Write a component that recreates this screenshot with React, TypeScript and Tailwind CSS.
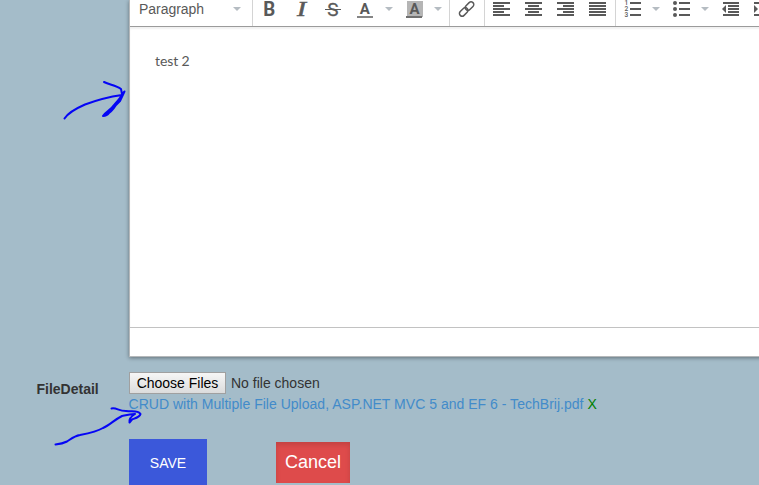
import type { ReactNode } from "react";

const INK = "#595959";

function Icon({ children, className = "w-8" }: { children: ReactNode; className?: string }) {
  return (
    <button type="button" className={`h-[26px] shrink-0 ${className}`}>
      <svg width="32" height="26" viewBox="0 0 32 26" className="block overflow-visible" fill={INK}>
        {children}
      </svg>
    </button>
  );
}

function Caret({ className = "w-4" }: { className?: string }) {
  return (
    <span className={`flex h-[26px] shrink-0 justify-center pt-[7px] ${className}`}>
      <svg width="8" height="4" viewBox="0 0 8 4" fill="#b5bcc2">
        <path d="M0 0h8L4 4z" />
      </svg>
    </span>
  );
}

function Lines({ rows }: { rows: [number, number][] }) {
  return (
    <>
      {rows.map(([x, w], i) => (
        <rect key={i} x={x} y={2 + i * 3} width={w} height="2" />
      ))}
    </>
  );
}

const group = "flex h-[26px] shrink-0 border-r border-[#d4d4d4]";

function Toolbar() {
  return (
    <div className="flex h-[27px] overflow-hidden border-b border-[#9b9b9b] bg-white">
      <div className={`${group} w-[123px] justify-between pl-[9px]`}>
        <span className="-mt-[1px] text-[14px] leading-5 tracking-[-0.03px] text-[#595959]">Paragraph</span>
        <Caret className="w-[31px]" />
      </div>
      <div className={`${group} w-[197px]`}>
        <Icon>
          <text x="10.2" y="16" fontSize="19.5" fontWeight="700" fontFamily="Roboto" textLength="12" lengthAdjust="spacingAndGlyphs">B</text>
        </Icon>
        <Icon>
          <text x="12" y="16" fontSize="21" fontStyle="italic" fontFamily="Liberation Serif" stroke={INK} strokeWidth=".6" textLength="9" lengthAdjust="spacingAndGlyphs">I</text>
        </Icon>
        <Icon>
          <text x="10.2" y="16" fontSize="19" fontFamily="Roboto" stroke={INK} strokeWidth=".3" textLength="12">S</text>
          <rect x="8" y="9" width="16" height="1" />
        </Icon>
        <Icon>
          <text x="10.8" y="14" fontSize="15" fontWeight="700" fontFamily="Roboto">A</text>
          <rect x="8" y="16" width="16" height="2" fill="#858585" />
        </Icon>
        <Caret />
        <Icon className="ml-px w-8">
          <rect x="9" y="1" width="16" height="16" fill="#b5b5b5" />
          <text x="11.6" y="14" fontSize="15" fontWeight="700" fontFamily="Roboto">A</text>
          <rect x="8" y="16" width="16" height="2" fill="#707070" />
        </Icon>
        <Caret />
      </div>
      <div className={`${group} w-[35px]`}>
        <Icon>
          <g transform="translate(16.6 9) rotate(-45)" fill="none" stroke={INK} strokeWidth="1.5">
            <rect x="-9" y="-2.7" width="9.8" height="5.4" rx="2.7" />
            <rect x="-0.8" y="-2.7" width="9.8" height="5.4" rx="2.7" />
          </g>
        </Icon>
      </div>
      <div className={`${group} w-[131px]`}>
        <Icon><Lines rows={[[8, 17], [8, 11], [8, 17], [8, 11], [8, 17]]} /></Icon>
        <Icon><Lines rows={[[8, 17], [11, 11], [8, 17], [11, 11], [8, 17]]} /></Icon>
        <Icon><Lines rows={[[8, 17], [14, 11], [8, 17], [14, 11], [8, 17]]} /></Icon>
        <Icon><Lines rows={[[8, 17], [8, 17], [8, 17], [8, 17], [8, 17]]} /></Icon>
      </div>
      <div className="flex h-[26px]">
        <Icon>
          <g fontFamily="Roboto" fontSize="6.5" fontWeight="500">
            <text x="8.5" y="5">1</text>
            <text x="8.5" y="11">2</text>
            <text x="8.5" y="17">3</text>
          </g>
          <path d="M14 2h11v2H14zM14 8h11v2H14zM14 14h11v2H14z" />
        </Icon>
        <Caret className="w-[15px]" />
        <Icon className="ml-px w-8">
          <circle cx="11" cy="3" r="2" />
          <circle cx="11" cy="9" r="2" />
          <circle cx="11" cy="15" r="2" />
          <path d="M15 2h11v2H15zM15 8h11v2H15zM15 14h11v2H15z" />
        </Icon>
        <Caret className="w-[17px]" />
        <Icon>
          <path d="M10 2h16v2H10zM15 5h11v2H15zM15 8h11v2H15zM15 11h11v2H15zM10 14h16v2H10zM9 9l4-4v8z" />
        </Icon>
        <Icon>
          <path d="M9 2h16v2H9zM15 5h10v2H15zM15 8h10v2H15zM15 11h10v2H15zM9 14h16v2H9zM13 9L9 5v8z" />
        </Icon>
      </div>
    </div>
  );
}

function Arrow({ className, d, viewBox }: { className: string; d: string; viewBox: string }) {
  return (
    <svg className={`pointer-events-none absolute ${className}`} viewBox={viewBox} fill="none" stroke="#0505f5" strokeWidth="2" strokeLinecap="round" strokeLinejoin="round">
      <path d={d} />
    </svg>
  );
}

export default function App() {
  return (
    <div className="relative h-[485px] w-[759px] overflow-hidden bg-[#a4bcc9] font-['Liberation_Sans',Arial,sans-serif] text-[14px] text-[#333]">
      <div className="ml-[129px] h-[357px] w-[640px] border-b border-l border-[#b5b8ba] bg-white shadow-[0_1px_4px_rgba(0,0,0,0.4)]">
        <Toolbar />
        <div className="h-[301px] border-b border-[#c2c2c2] pl-[25px] pt-[24px] shadow-[inset_0_2px_2px_rgba(0,0,0,0.06)]">
          <p className="font-[Lato,sans-serif] text-[14px] leading-5 tracking-[-0.1px] text-[#595959]">test 2</p>
        </div>
      </div>

      <div className="mt-[15px] flex">
        <label className="w-[129px] shrink-0 pl-[36.5px] pt-[7px] font-bold leading-5">FileDetail</label>
        <div>
          <div className="flex h-[22px] items-center">
            <button type="button" className="h-[22px] w-[97px] whitespace-nowrap border border-[#a0a0a0] bg-linear-to-b from-[#f6f6f6] to-[#dcdcdc] text-[14px] leading-5 text-black">
              Choose Files
            </button>
            <span className="ml-[5px] leading-5">No file chosen</span>
          </div>
          <div className="-ml-[0.5px] whitespace-nowrap leading-5 tracking-[0.02px]">
            <a className="text-[#428bca]">CRUD with Multiple File Upload, ASP.NET MVC 5 and EF 6 - TechBrij.pdf</a>{" "}
            <a className="text-[#008000]">X</a>
          </div>
        </div>
      </div>

      <div className="ml-[129px] mt-[25px] flex items-start">
        <button type="button" className="h-[48px] w-[78px] bg-[#3b58da] text-[14px] text-white">SAVE</button>
        <button type="button" className="ml-[69px] mt-[3px] h-[41px] w-[74px] bg-[#de4b4b] text-[18px] text-white shadow-[inset_0_3px_5px_rgba(0,0,0,0.125)]">
          Cancel
        </button>
      </div>

      <Arrow
        className="left-[50px] top-[70px] h-[60px] w-[90px]"
        viewBox="0 0 90 60"
        d="M14.5 48.5C18 43 27 38 35 34.5C47 30 58 27 72 25M54 12C60 15 66 15 71 19L72 24L74.500 21.500C68 31 65 39 59 43C57 46 55 46 53 46C55 42 61 40 64 35C68 30 71 28 74.500 21.500L70 31L56 45"
      />
      <Arrow
        className="left-[50px] top-[400px] h-[50px] w-[100px]"
        viewBox="0 0 100 50"
        d="M5.500 44.500C10 44 14 43 17 41.500C21 39 24 36 30 35C40 33 48 31 53 28C60 25 64 20 72 16C78 15 82 14 85 14M61.500 8.500C67 7.500 68 11 76 11C82 12 88 10 90.500 14C90 17 86 18 82 19.500L79.500 22.500C79 20 80 17 85 14"
      />
    </div>
  );
}
